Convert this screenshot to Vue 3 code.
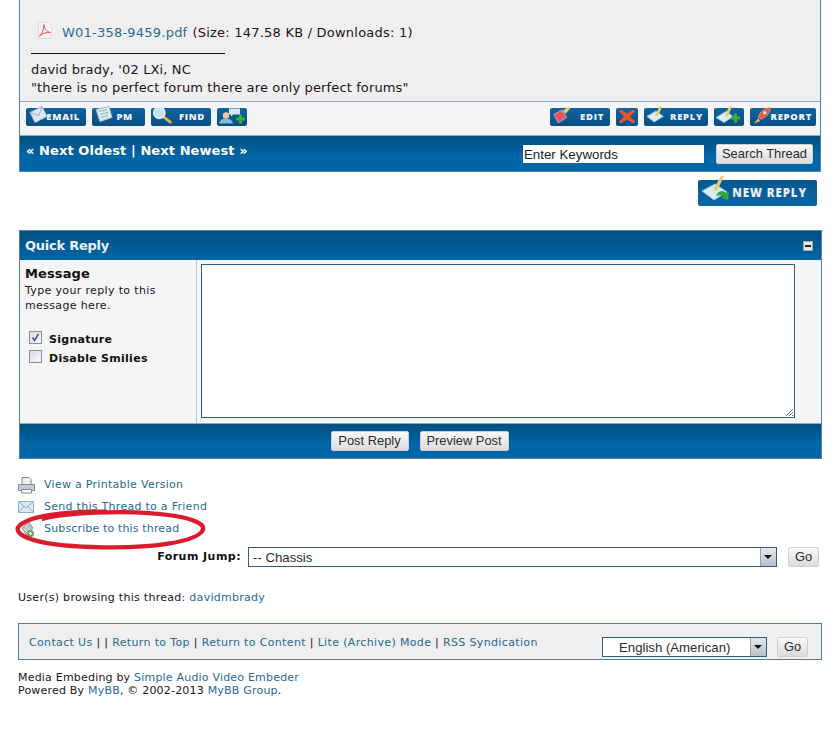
<script setup>
const leftBtns = [
  { id: 'mail', label: 'EMAIL', w: 60, pad: 6 },
  { id: 'pm', label: 'PM', w: 53, pad: 12 },
  { id: 'find', label: 'FIND', w: 60, pad: 6 },
  { id: 'buddy', label: '', w: 30, pad: 0 },
]
const rightBtns = [
  { id: 'edit', label: 'EDIT', w: 60, pad: 6 },
  { id: 'del', label: '', w: 22, pad: 0 },
  { id: 'reply', label: 'REPLY', w: 64, pad: 5 },
  { id: 'multi', label: '', w: 30, pad: 0 },
  { id: 'report', label: 'REPORT', w: 66, pad: 4 },
]
const footLinks = ['Return to Top', 'Return to Content', 'Lite (Archive) Mode', 'RSS Syndication']
</script>

<template>
  <div class="page">
    <svg class="defs" width="0" height="0" aria-hidden="true">
      <symbol id="mail" viewBox="0 0 22 20">
        <path d="M3 7 15 1l5 10-12 6z" fill="#dfe6f2" stroke="#a9b8d4" />
        <path d="M3 7l9 3 3-9" fill="none" stroke="#9fb0cf" />
      </symbol>
      <symbol id="pm" viewBox="0 0 22 20">
        <path d="M3 4 16 1l3 11-12 4z" fill="#dcecec" stroke="#9cc0c0" />
        <path d="M6 6l8-2M7 9l8-2M8 12l7-2" stroke="#7fbcaa" />
      </symbol>
      <symbol id="find" viewBox="0 0 24 20">
        <path d="M12 11l9 7" stroke="#d9b25c" stroke-width="3" />
        <circle cx="8" cy="7" r="6" fill="#bfe0f5" stroke="#e6eef4" stroke-width="2" />
      </symbol>
      <symbol id="buddy" viewBox="0 0 30 20">
        <path d="M12 3h11v6H16l-2 2V9h-2z" fill="#dfe8f0" />
        <circle cx="9" cy="10" r="3.2" fill="#f0c8a0" />
        <path d="M2 18c1-4 4-5 7-5s6 1 7 5z" fill="#8fb8de" />
        <path d="M22 9h3v3h3v3h-3v3h-3v-3h-3v-3h3z" fill="#35b03a" />
      </symbol>
      <symbol id="edit" viewBox="0 0 24 20">
        <path d="M3 9l9-5 5 8-9 6z" fill="#d8586a" stroke="#e8a0a8" />
        <path d="M13 5 19 0l2 2-5 6z" fill="#e8d070" />
      </symbol>
      <symbol id="del" viewBox="0 0 22 20">
        <path d="M5 4l6 4 6-4 2 2-5 5 5 5-2 2-6-4-6 4-2-2 5-5-5-5z" fill="#e8542c" />
      </symbol>
      <symbol id="reply" viewBox="0 0 24 20">
        <path d="M2 11 12 5l8 6-10 6z" fill="#dcecf8" stroke="#8fc0e4" />
        <path d="M11 10 16 0h3l-5 11z" fill="#e6cf70" />
      </symbol>
      <symbol id="multi" viewBox="0 0 30 20">
        <path d="M2 12 12 6l7 5-9 6z" fill="#dcecf8" stroke="#8fc0e4" />
        <path d="M11 10 15 1h3l-4 10z" fill="#e6cf70" />
        <path d="M20 8h3v3h3v3h-3v3h-3v-3h-3v-3h3z" fill="#35b03a" />
      </symbol>
      <symbol id="report" viewBox="0 0 24 20">
        <path d="M8 12C9 6 15 2 21 1c0 6-4 11-10 13z" fill="#e8593a" stroke="#f2b0a0" stroke-width=".7" />
        <path d="M8 13l-5 6 7-3z" fill="#f0c050" />
        <circle cx="15" cy="7" r="1.8" fill="#dfe8f0" />
      </symbol>
    </svg>

    <section class="post">
      <div class="post-body">
        <div class="attach">
          <svg class="pdf" viewBox="0 0 16 17" width="16" height="17">
            <path d="M1.5.5h9l4 4v12h-13z" fill="#f6f4f3" stroke="#dedad8" />
            <path d="M2.500 14C5 12 7 7 7 2.500c0 3 2 7 6.500 8-3.500-.5-7.500.5-11 3.500z" fill="none" stroke="#dc5a4c" />
          </svg>
          <a class="link">W01-358-9459.pdf</a>
          <span>(Size: 147.58 KB / Downloads: 1)</span>
        </div>
        <div class="sig-rule"></div>
        <p class="sig">david brady, '02 LXi, NC<br />"there is no perfect forum there are only perfect forums"</p>
      </div>
      <div class="post-btns">
        <div class="btn-group">
          <span v-for="b in leftBtns" :key="b.id" class="img-btn" :style="{ width: b.w + 'px', paddingRight: b.pad + 'px' }">
            <svg class="btn-ico" :class="{ wide: !b.label }"><use :href="'#' + b.id" /></svg>
            <span v-if="b.label" class="btn-label">{{ b.label }}</span>
          </span>
        </div>
        <div class="btn-group">
          <span v-for="b in rightBtns" :key="b.id" class="img-btn" :style="{ width: b.w + 'px', paddingRight: b.pad + 'px' }">
            <svg class="btn-ico" :class="{ wide: !b.label }"><use :href="'#' + b.id" /></svg>
            <span v-if="b.label" class="btn-label">{{ b.label }}</span>
          </span>
        </div>
      </div>
      <div class="bluebar nav">
        <strong class="nav-links">« Next Oldest | Next Newest »</strong>
        <div class="search">
          <input class="kw" value="Enter Keywords" />
          <button class="btn search-btn">Search Thread</button>
        </div>
      </div>
    </section>

    <div class="new-reply-row">
      <span class="new-reply">
        <svg width="34" height="28" viewBox="0 0 34 28" class="nr-ico">
          <path d="M2 15 15 8l12 8-13 8z" fill="#d8ecf8" stroke="#8cc4e8" />
          <path d="M13 14 21 0h3l-7 15z" fill="#e6cf70" />
          <path d="M16 20c2-6 8-6 10-3l3-1-1 8-7-2 3-2c-2-1-5-1-8 0z" fill="#35a83a" />
        </svg>
        <span>NEW REPLY</span>
      </span>
    </div>

    <section class="quick">
      <header class="q-head">
        <strong>Quick Reply</strong>
        <span class="collapse"></span>
      </header>
      <div class="q-main">
        <aside class="q-side">
          <strong class="q-title">Message</strong>
          <p class="q-hint">Type your reply to this<br />message here.</p>
          <div class="q-check">
            <span class="box">
              <svg width="11" height="11" viewBox="0 0 11 11"><path d="M2.500 5.500 4.500 8.500 8.500 2" fill="none" stroke="#4a5c8c" stroke-width="1.600" /></svg>
            </span>
            <strong>Signature</strong>
          </div>
          <div class="q-check"><span class="box"></span><strong>Disable Smilies</strong></div>
        </aside>
        <div class="q-text">
          <div class="textarea">
            <svg class="grip" width="10" height="10" viewBox="0 0 10 10"><path d="M9 2 2 9M9 5 5 9M9 8 8 9" stroke="#777" fill="none" /></svg>
          </div>
        </div>
      </div>
      <div class="bluebar q-foot">
        <button class="btn post-reply">Post Reply</button>
        <button class="btn preview">Preview Post</button>
      </div>
    </section>

    <ul class="tools">
      <li>
        <svg width="18" height="18" viewBox="0 0 18 18">
          <path d="M4 8V1.500h7l2 2V8" fill="#eef2f6" stroke="#7d8b9a" />
          <path d="M.5 8.500h16v6H.5z" fill="#c3ccd5" stroke="#7d8b9a" />
          <path d="M3.500 13.500h10v3.500h-10z" fill="#fff" stroke="#7d8b9a" />
        </svg>
        <a class="link">View a Printable Version</a>
      </li>
      <li>
        <svg width="18" height="18" viewBox="0 0 18 18">
          <path d="M.5 3.500h15v11H.5z" fill="#dbe8f5" stroke="#8fb0cf" />
          <path d="M.5 3.500 8 10l7.500-6.500M.5 14.500 6 8.500M15.500 14.500 10 8.500" fill="none" stroke="#8fb0cf" />
        </svg>
        <a class="link">Send this Thread to a Friend</a>
      </li>
      <li>
        <svg width="18" height="18" viewBox="0 0 18 18">
          <path d="M4 8 10 1l5 7-6 8z" fill="#b8bec4" stroke="#8d959c" />
          <path d="M7 6l5 4M6 9l4 4" stroke="#e6e8ea" />
          <circle cx="12.500" cy="13.500" r="3.500" fill="#62ad58" />
          <path d="M11 13.500h3M12.500 12v3" stroke="#fff" />
        </svg>
        <a class="link tight">Subscribe to this thread</a>
      </li>
    </ul>

    <div class="jump">
      <strong>Forum Jump:</strong>
      <div class="select jump-select">
        <span class="sel-val">-- Chassis</span>
        <span class="arrow"></span>
      </div>
      <button class="btn go">Go</button>
    </div>

    <p class="browsing">User(s) browsing this thread: <a class="link">davidmbrady</a></p>

    <footer class="foot">
      <div class="foot-links">
        <a class="link">Contact Us</a> | | 
        <template v-for="(l, i) in footLinks" :key="l"><a class="link">{{ l }}</a><template v-if="i < footLinks.length - 1"> | </template></template>
      </div>
      <div class="foot-lang">
        <div class="select lang-select">
          <span class="sel-val">English (American)</span>
          <span class="arrow"></span>
        </div>
        <button class="btn go">Go</button>
      </div>
    </footer>

    <p class="credits">
      Media Embeding by <a class="link">Simple Audio Video Embeder</a><br />
      Powered By <a class="link">MyBB</a>, © 2002-2013 <a class="link">MyBB Group</a>.
    </p>

    <svg class="circle" width="191" height="45" viewBox="0 0 200 48" preserveAspectRatio="none">
      <path d="M96 5C52 4 10 10 3 22c-3 10 24 20 88 21 50 1 100-5 106-19C200 12 150 3 84 6 60 7 40 9 28 13" fill="none" stroke="#dc1a2c" stroke-width="4.500" />
    </svg>
  </div>
</template>

<style scoped>
.page {
  position: relative;
  width: 838px;
  height: 734px;
  overflow: hidden;
  padding: 0 16px 0 18px;
  box-sizing: border-box;
  background: #fff;
  color: #1c1420;
  font: 11px/1.2 "DejaVu Sans", Verdana, sans-serif;
  letter-spacing: .28px;
}
.defs { position: absolute; }
.link { color: #2a6a94; }
.tight { letter-spacing: .15px; }

.post {
  margin-left: 1px;
  width: 802px;
  border: solid #4f83a8;
  border-width: 0 1px 1px;
  box-sizing: border-box;
}
.post-body {
  height: 101px;
  padding: 23px 0 0 11px;
  box-sizing: border-box;
  background: #efefef;
  font-size: 13px;
  letter-spacing: .13px;
}
.attach { display: flex; align-items: center; height: 17px; gap: 5px; padding-left: 6px; letter-spacing: .22px; margin-top: 1px; }
.pdf { margin-right: 4px; margin-top: -5px; }
.sig-rule { width: 194px; height: 1px; background: #111; margin-top: 12px; }
.sig { margin: 7px 0 0; line-height: 18px; }

.post-btns {
  display: flex;
  justify-content: space-between;
  height: 34px;
  padding: 6px 4px 0 6px;
  box-sizing: border-box;
  background: #f5f5f5;
  border-top: 1px solid #8aa8c8;
}
.btn-group { display: flex; gap: 6px; height: 18px; }
.img-btn {
  position: relative;
  display: flex;
  align-items: center;
  justify-content: flex-end;
  height: 18px;
  box-sizing: border-box;
  border-radius: 2px;
  background: linear-gradient(#0f639d, #0a4f83);
}
.btn-ico { position: absolute; left: 1px; top: -3px; width: 22px; height: 21px; }
.btn-ico.wide { width: 100%; left: 0; }
.btn-label {
  font: 800 9.500px/1 "Open Sans", sans-serif;
  letter-spacing: .7px;
  color: #f0f4f8;
}

.bluebar {
  background: linear-gradient(#03507f, #0066a8 62%, #0066a8);
  border: solid #8aa8c8;
  border-width: 1px 0 0;
}
.nav {
  display: flex;
  justify-content: space-between;
  height: 36px;
  padding: 7px 7px 0 6px;
  box-sizing: border-box;
  color: #fff;
}
.nav-links { font-size: 13px; line-height: 16px; letter-spacing: .08px; }
.search { display: flex; align-items: flex-start; gap: 12px; padding-top: 1px; }
.kw {
  width: 181px;
  height: 18px;
  margin-top: 1px;
  border: 0;
  padding: 0 1px;
  box-sizing: border-box;
  font: 13.300px "Liberation Sans", Arial, sans-serif;
  color: #222;
  background: #fff;
}
.btn {
  height: 20px;
  padding: 0 6px;
  border: 1px solid #d0d0d0;
  border-radius: 2px;
  background: linear-gradient(#f8f8f8, #dcdcdc);
  font: 12.900px/18px "Liberation Sans", Arial, sans-serif;
  color: #2c2c2c;
  box-sizing: border-box;
}
.search-btn { width: 97px; padding: 0; }
.post-reply { width: 78px; padding: 0; }
.preview { width: 89px; padding: 0; }

.new-reply-row { display: flex; justify-content: flex-end; padding: 8px 5px 0 0; }
.new-reply {
  position: relative;
  display: flex;
  align-items: center;
  justify-content: flex-end;
  width: 119px;
  height: 26px;
  padding-right: 10px;
  box-sizing: border-box;
  border-radius: 2px;
  background: linear-gradient(#09578f, #0866a5);
  font: 800 11.500px/1 "Open Sans", sans-serif;
  letter-spacing: .9px;
  color: #e8f0f6;
}
.nr-ico { position: absolute; left: 2px; top: -4px; }

.quick {
  margin: 24px 0 0 1px;
  width: 803px;
  height: 229px;
  border: 1px solid #4f83a8;
  box-sizing: border-box;
  display: flex;
  flex-direction: column;
}
.q-head {
  display: flex;
  align-items: center;
  justify-content: space-between;
  height: 29px;
  padding: 1px 8px 0 5px;
  box-sizing: border-box;
  background: linear-gradient(#03507f, #0066a8);
  color: #e8f2f8;
  font-size: 13px;
  letter-spacing: -.25px;
  flex: none;
}
.collapse {
  position: relative;
  width: 8px;
  height: 8px;
  background: #e8e8e8;
  border: 1px solid #9ab;
}
.collapse::after { content: ""; position: absolute; left: 1px; right: 1px; top: 3px; height: 2px; background: #222; }
.q-main { display: flex; flex: 1; background: #f5f5f5; }
.q-side {
  width: 177px;
  flex: none;
  padding: 6px 0 0 5px;
  box-sizing: border-box;
  border-right: 1px solid #b8c8d4;
}
.q-title { display: block; font-size: 13px; line-height: 15px; color: #111; letter-spacing: .1px; }
.q-hint { margin: 2px 0 17px; line-height: 15px; font-size: 11px; letter-spacing: .35px; }
.q-check { display: flex; align-items: center; gap: 7px; height: 19px; padding-left: 4px; font-size: 11px; color: #111; }
.box {
  display: flex;
  align-items: center;
  justify-content: center;
  width: 13px;
  height: 13px;
  border: 1px solid #8d8d96;
  box-sizing: border-box;
  background: linear-gradient(135deg, #dcdce4, #f8f8fa);
  margin-bottom: 5px;
}
.q-text { flex: 1; padding: 4px 0 0 4px; }
.textarea {
  position: relative;
  width: 594px;
  height: 154px;
  box-sizing: border-box;
  background: #fff;
  border: 1px solid #2f5f7f;
}
.grip { position: absolute; right: 0; bottom: 0; }
.q-foot {
  display: flex;
  justify-content: center;
  gap: 11px;
  flex: none;
  height: 35px;
  padding: 7px 2px 0 0;
  box-sizing: border-box;
}

.tools { list-style: none; margin: 15px 0 0; padding: 0; }
.tools li { display: flex; align-items: center; gap: 8px; height: 22px; }

.jump {
  display: flex;
  align-items: center;
  justify-content: flex-end;
  margin-top: 7px;
  padding-right: 3px;
  height: 20px;
}
.jump strong { margin-right: 7px; color: #111; letter-spacing: .45px; }
.select {
  display: flex;
  align-items: center;
  height: 20px;
  border: 1px solid #2f5f7f;
  box-sizing: border-box;
  background: #fff;
  font: 13.200px "Liberation Sans", Arial, sans-serif;
  letter-spacing: 0;
  color: #2c2c2c;
}
.jump-select { width: 529px; margin-right: 11px; }
.sel-val { flex: 1; padding-left: 4px; }
.arrow {
  position: relative;
  width: 16px;
  height: 18px;
  background: linear-gradient(#e4e8ec, #b8c0c8);
  border-left: 1px solid #98a4b0;
  box-sizing: border-box;
}
.arrow::after {
  content: "";
  position: absolute;
  left: 3px;
  top: 7px;
  border: 4px solid transparent;
  border-top: 4px solid #111;
}
.go { width: 31px; padding: 0; }

.browsing { margin: 24px 0 0; line-height: 14px; }

.foot {
  display: flex;
  justify-content: space-between;
  width: 804px;
  height: 37px;
  margin-top: 18px;
  border: 1px solid #4f7f9f;
  box-sizing: border-box;
  background: #efefef;
}
.foot-links { padding: 12px 0 0 10px; line-height: 14px; white-space: pre-wrap; letter-spacing: .35px; }
.foot-lang { display: flex; align-items: flex-start; gap: 10px; padding: 13px 13px 0 0; }
.lang-select { width: 165px; }
.lang-select .sel-val { padding-left: 16px; }

.credits { margin: 11px 0 0; line-height: 13px; letter-spacing: .2px; }

.circle { position: absolute; left: 15px; top: 507px; pointer-events: none; }
</style>
<style>
body { margin: 0; background: #fff; }
</style>
